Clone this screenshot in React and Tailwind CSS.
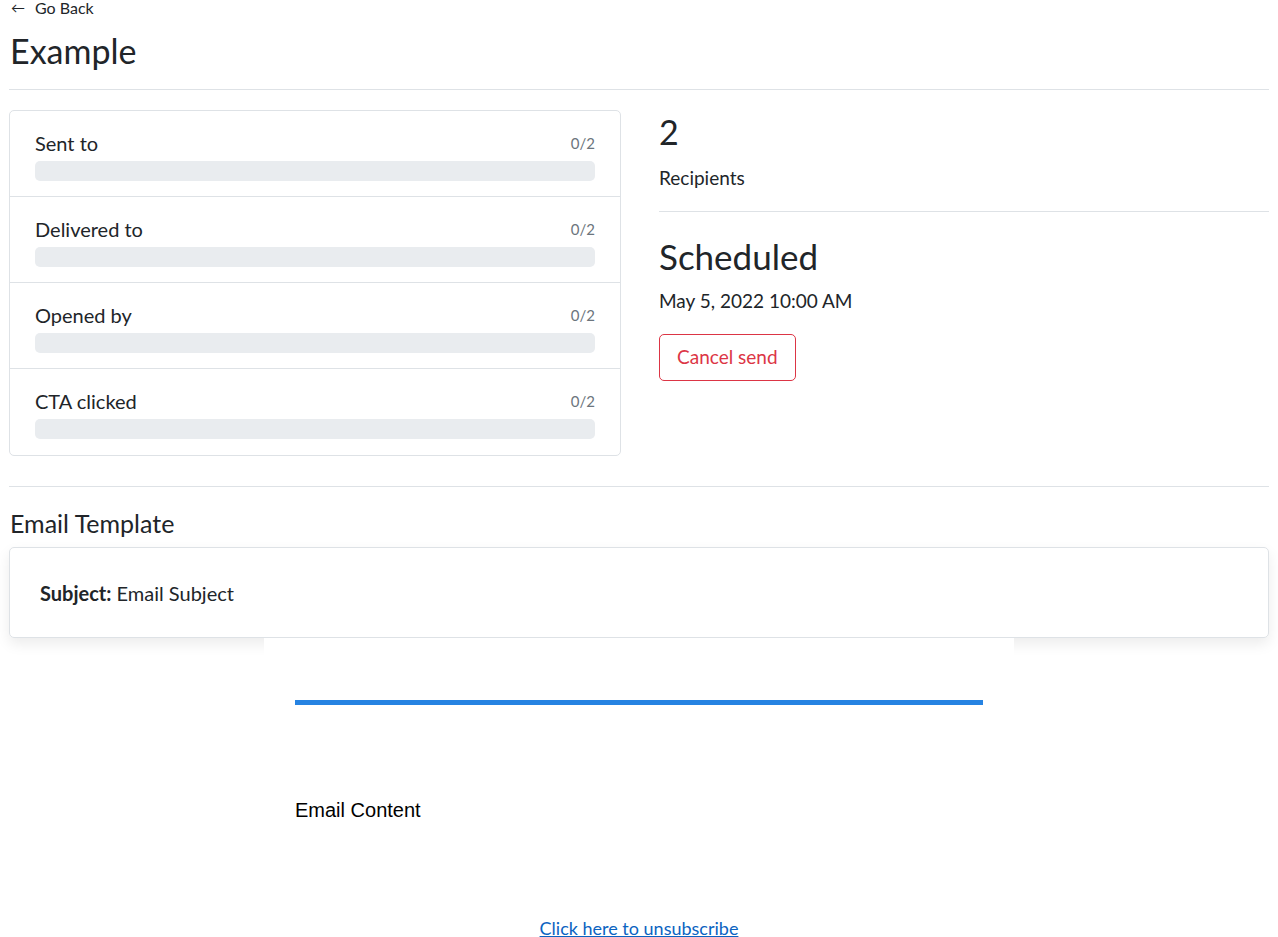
const stats = [
  { label: "Sent to", value: "0/2" },
  { label: "Delivered to", value: "0/2" },
  { label: "Opened by", value: "0/2" },
  { label: "CTA clicked", value: "0/2" },
];

const StatRow = ({ label, value, last }) => (
  <div
    className={`px-[25px] pt-[20px] ${last ? "pb-[16px]" : "pb-[15px] border-b border-[#dee2e6]"}`}
  >
    <div className="flex items-center justify-between h-[24px] mb-[6px]">
      <span className="text-[20px]">{label}</span>
      <span className="text-[15px] text-[#6c757d]">{value}</span>
    </div>
    <div className="h-[20px] rounded-[5px] bg-[#e9ecef]"></div>
  </div>
);

export default function App() {
  return (
    <div
      className="min-h-screen bg-white text-[#212529] px-[9px]"
      style={{ fontFamily: "Lato, 'Open Sans', sans-serif" }}
    >
      {/* header */}
      <div className="flex items-center gap-[10px] text-[16px] leading-[20px] -mt-[2px] pl-[2px]">
        <span className="text-[14px]">←</span>
        <span>Go Back</span>
      </div>
      <h2 className="text-[34px] leading-[40px] pl-[1px] mt-[13px]">Example</h2>
      <hr className="border-0 border-t border-[#dee2e6] mt-[18px]" />

      {/* stats */}
      <div className="grid grid-cols-[612px_1fr] gap-[38px] mt-[20px]">
        <div className="border border-[#dee2e6] rounded-[5px]">
          {stats.map((s, i) => (
            <StatRow key={s.label} {...s} last={i === stats.length - 1} />
          ))}
        </div>
        <div>
          <div className="text-[34px] leading-[44px]">2</div>
          <div className="text-[19px] leading-[24px] mt-[12px]">Recipients</div>
          <hr className="border-0 border-t border-[#dee2e6] mt-[21px]" />
          <div className="text-[35px] leading-[44px] mt-[22px]">Scheduled</div>
          <div className="text-[19px] leading-[24px] mt-[11px]">May 5, 2022 10:00 AM</div>
          <button className="mt-[21px] h-[47px] px-[17px] border border-[#dc3545] rounded-[5px] text-[19px] text-[#dc3545]">
            Cancel send
          </button>
        </div>
      </div>

      <hr className="border-0 border-t border-[#dee2e6] mt-[30px]" />

      {/* email template */}
      <h4 className="text-[25px] leading-[30px] mt-[21px] pl-[1px]">Email Template</h4>
      <div className="mt-[9px] h-[91px] flex items-center px-[30px] border border-[#dee2e6] rounded-[5px] shadow-[0_6px_14px_rgba(0,0,0,0.08)]">
        <span className="text-[20px]">
          <b>Subject:</b> Email Subject
        </span>
      </div>

      <div className="relative z-10 w-[750px] mx-auto bg-white px-[31px] pt-[62px] pb-[40px]">
        <div className="h-[5px] bg-[#2683e2]"></div>
        <p
          className="text-[20px] text-black mt-[90px]"
          style={{ fontFamily: "'Liberation Sans', Arial, sans-serif" }}
        >
          Email Content
        </p>
        <div className="text-center mt-[90px]">
          <a href="#" className="text-[18px] text-[#0b63c1] underline">
            Click here to unsubscribe
          </a>
        </div>
      </div>
    </div>
  );
}
